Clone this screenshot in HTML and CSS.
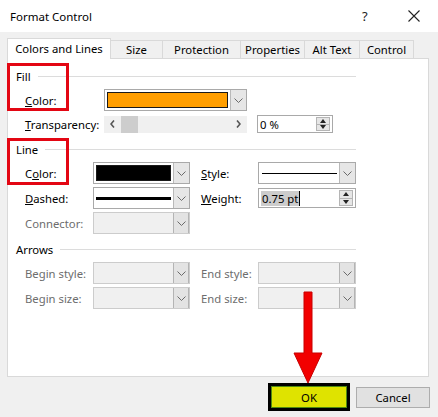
FILE: index.html
```html
<!DOCTYPE html>
<html>
<head>
<meta charset="utf-8">
<link rel="stylesheet" href="styles.css">
</head>
<body>
<div class="window">
  <div class="titlebar">
    <span class="title">Format Control</span>
    <span class="help">?</span>
    <span class="close"><svg width="12" height="12" viewBox="0 0 12 12"><path d="M0.5 0.5 L11.5 11.5 M11.5 0.5 L0.5 11.5" stroke="#222" stroke-width="1.1" fill="none"/></svg></span>
  </div>
  <div class="content">
    <div class="tabs">
      <div class="tab tab-active tab-colors">Colors and Lines</div>
      <div class="tab tab-size">Size</div>
      <div class="tab tab-protection">Protection</div>
      <div class="tab tab-properties">Properties</div>
      <div class="tab tab-alt">Alt Text</div>
      <div class="tab tab-control">Control</div>
    </div>
    <div class="panel">
      <div class="group-head head-fill"><span>Fill</span><i></i></div>
      <div class="row row-fill-color">
        <span class="label label-fill"><u>C</u>olor:</span>
        <div class="combo combo-fill">
          <div class="combo-field"><span class="swatch swatch-orange"></span></div>
          <div class="combo-btn"><svg width="9" height="5" viewBox="0 0 9 5"><path d="M0.5 0.5 L4.5 4.5 L8.5 0.5" fill="none" stroke="#6a6a6a"/></svg></div>
        </div>
      </div>
      <div class="row row-transp">
        <span class="label label-fill"><u>T</u>ransparency:</span>
        <div class="scrollbar">
          <span class="sarrow"><svg width="5" height="8" viewBox="0 0 5 8"><path d="M4 0.5 L1 4 L4 7.5" fill="none" stroke="#555" stroke-width="1.6"/></svg></span>
          <span class="thumb"></span>
          <span class="track"></span>
          <span class="sarrow"><svg width="5" height="8" viewBox="0 0 5 8"><path d="M1 0.5 L4 4 L1 7.5" fill="none" stroke="#555" stroke-width="1.6"/></svg></span>
        </div>
        <div class="spinner spinner-transp">
          <span class="spin-text">0 %</span>
          <span class="spin-btns"><span class="up"></span><span class="down"></span></span>
        </div>
      </div>

      <div class="group-head head-line"><span>Line</span><i></i></div>
      <div class="row row-line-first">
        <span class="label label-line">C<u>o</u>lor:</span>
        <div class="combo combo-line">
          <div class="combo-field"><span class="swatch swatch-black"></span></div>
          <div class="combo-btn"><svg width="9" height="5" viewBox="0 0 9 5"><path d="M0.5 0.5 L4.5 4.5 L8.5 0.5" fill="none" stroke="#6a6a6a"/></svg></div>
        </div>
        <span class="label label-right"><u>S</u>tyle:</span>
        <div class="combo combo-right">
          <div class="combo-field"><span class="stroke stroke-thin"></span></div>
          <div class="combo-btn"><svg width="9" height="5" viewBox="0 0 9 5"><path d="M0.5 0.5 L4.5 4.5 L8.5 0.5" fill="none" stroke="#6a6a6a"/></svg></div>
        </div>
      </div>
      <div class="row row-line">
        <span class="label label-line"><u>D</u>ashed:</span>
        <div class="combo combo-line">
          <div class="combo-field"><span class="stroke stroke-thick"></span></div>
          <div class="combo-btn"><svg width="9" height="5" viewBox="0 0 9 5"><path d="M0.5 0.5 L4.5 4.5 L8.5 0.5" fill="none" stroke="#6a6a6a"/></svg></div>
        </div>
        <span class="label label-right"><u>W</u>eight:</span>
        <div class="spinner spinner-weight">
          <span class="spin-text"><span class="selected">0.75 pt</span><span class="caret"></span></span>
          <span class="spin-btns"><span class="up"></span><span class="down"></span></span>
        </div>
      </div>
      <div class="row row-line">
        <span class="label label-line disabled">Connector:</span>
        <div class="combo combo-line combo-disabled">
          <div class="combo-field"></div>
          <div class="combo-btn"><svg width="9" height="5" viewBox="0 0 9 5"><path d="M0.5 0.5 L4.5 4.5 L8.5 0.5" fill="none" stroke="#6a6a6a"/></svg></div>
        </div>
      </div>

      <div class="group-head head-arrows"><span>Arrows</span><i></i></div>
      <div class="row row-line-first">
        <span class="label label-line disabled">Begin style:</span>
        <div class="combo combo-line combo-disabled">
          <div class="combo-field"></div>
          <div class="combo-btn"><svg width="9" height="5" viewBox="0 0 9 5"><path d="M0.5 0.5 L4.5 4.5 L8.5 0.5" fill="none" stroke="#6a6a6a"/></svg></div>
        </div>
        <span class="label label-right disabled">End style:</span>
        <div class="combo combo-right combo-disabled">
          <div class="combo-field"></div>
          <div class="combo-btn"><svg width="9" height="5" viewBox="0 0 9 5"><path d="M0.5 0.5 L4.5 4.5 L8.5 0.5" fill="none" stroke="#6a6a6a"/></svg></div>
        </div>
      </div>
      <div class="row row-line">
        <span class="label label-line disabled">Begin size:</span>
        <div class="combo combo-line combo-disabled">
          <div class="combo-field"></div>
          <div class="combo-btn"><svg width="9" height="5" viewBox="0 0 9 5"><path d="M0.5 0.5 L4.5 4.5 L8.5 0.5" fill="none" stroke="#6a6a6a"/></svg></div>
        </div>
        <span class="label label-right disabled">End size:</span>
        <div class="combo combo-right combo-disabled">
          <div class="combo-field"></div>
          <div class="combo-btn"><svg width="9" height="5" viewBox="0 0 9 5"><path d="M0.5 0.5 L4.5 4.5 L8.5 0.5" fill="none" stroke="#6a6a6a"/></svg></div>
        </div>
      </div>
    </div>
    <div class="buttons">
      <div class="btn-ok-frame"><div class="btn btn-ok">OK</div></div>
      <div class="btn btn-cancel">Cancel</div>
    </div>
  </div>

  <div class="callout callout-fill"></div>
  <div class="callout callout-line"></div>
  <svg class="arrow" width="32" height="94" viewBox="0 0 32 94">
    <path d="M12 1 L20 1 L20 62 L30 62 L16 92 L2 62 L12 62 Z" fill="#f20000" stroke="#c80000" stroke-width="1" stroke-linejoin="round"/>
  </svg>
</div>
</body>
</html>
```

FILE: styles.css
```css
* { box-sizing: border-box; }

html, body {
  margin: 0;
  padding: 0;
}

body {
  width: 438px;
  height: 417px;
  overflow: hidden;
  background: #f0f0f0;
  font-family: "Noto Sans", "DejaVu Sans", sans-serif;
  font-size: 11.3px;
  color: #000;
}

.window {
  position: relative;
  width: 438px;
  height: 417px;
  background: #f0f0f0;
}

/* Title bar */
.titlebar {
  height: 32px;
  background: #fff;
  display: flex;
  align-items: center;
  padding-left: 10px;
}

.title {
  flex: 1;
  font-size: 11.5px;
  color: #000;
}

.help {
  width: 12px;
  margin-right: 34px;
  font-size: 13px;
  color: #222;
}

.close {
  width: 12px;
  height: 12px;
  margin-right: 18px;
  display: flex;
}

/* Content */
.content {
  padding: 6px 9px 0 7px;
}

.tabs {
  display: flex;
  align-items: flex-end;
  height: 20px;
  position: relative;
  z-index: 2;
}

.tab {
  height: 18px;
  border: 1px solid #d9d9d9;
  border-bottom: none;
  border-left: none;
  background: #f0f0f0;
  display: flex;
  align-items: center;
  justify-content: center;
  color: #000;
  white-space: nowrap;
}

.tab-active {
  height: 21px;
  margin-bottom: -1px;
  background: #fff;
  border-left: 1px solid #d9d9d9;
  padding-bottom: 1px;
}

.tab-colors { width: 104px; }
.tab-size { width: 52px; }
.tab-protection { width: 78px; }
.tab-properties { width: 64px; }
.tab-alt { width: 55px; }
.tab-control { width: 54px; }

.panel {
  width: 422px;
  height: 319px;
  background: #fff;
  border: 1px solid #d9d9d9;
  padding: 0 0 0 8px;
  display: flex;
  flex-direction: column;
}

/* Group headers */
.group-head {
  width: 340px;
  height: 16px;
  display: flex;
  align-items: center;
  gap: 7px;
}

.group-head i {
  flex: 1;
  height: 1px;
  background: #dcdcdc;
}

.head-fill { margin-top: 9px; }
.head-line { margin-top: 6px; }
.head-arrows { margin-top: 7px; }

/* Rows */
.row {
  height: 22px;
  display: flex;
  align-items: center;
  padding-left: 9px;
}

.row-fill-color { margin-top: 5px; }
.row-transp { margin-top: 2px; }
.row-line-first { margin-top: 5px; }
.row-line { margin-top: 3px; }

.label {
  white-space: nowrap;
}

.label-fill { width: 79px; }
.label-line { width: 68px; }
.label-right { width: 57px; margin-left: 11px; }

.disabled { color: #6d6d6d; }

/* Combo boxes */
.combo {
  height: 22px;
  display: flex;
  border: 1px solid #a9a9a9;
  background: #fff;
}

.combo-fill { width: 143px; }
.combo-line { width: 97px; }
.combo-right { width: 98px; }

.combo-field {
  flex: 1;
  padding: 2px;
  display: flex;
  align-items: center;
}

.combo-btn {
  width: 16px;
  background: #e6e6e6;
  border-left: 1px solid #b9b9b9;
  display: flex;
  align-items: center;
  justify-content: center;
}

.combo-disabled {
  background: #f0f0f0;
  border-color: #cccccc;
}

.combo-disabled .combo-btn {
  background: #e3e3e3;
  border-left: 1px solid #b4b4b4;
  border-right: 1px solid #b4b4b4;
}

.swatch {
  display: block;
  width: 100%;
  height: 100%;
  border: 1px solid #1a1a1a;
}

.swatch-orange { background: #ff9e00; }
.swatch-black { background: #000; }

.stroke {
  display: block;
  width: 100%;
  background: #000;
}

.stroke-thin { height: 1px; margin-left: 1px; }
.stroke-thick { height: 3px; }

/* Scrollbar */
.scrollbar {
  width: 143px;
  height: 17px;
  background: #f0f0f0;
  display: flex;
  align-items: center;
}

.sarrow {
  width: 17px;
  height: 17px;
  display: flex;
  align-items: center;
  justify-content: center;
}

.thumb {
  width: 17px;
  height: 17px;
  background: #cdcdcd;
}

.track { flex: 1; }

/* Spinners */
.spinner {
  height: 18px;
  display: flex;
  border: 1px solid #a9a9a9;
  background: #fff;
}

.spinner-transp { width: 76px; margin-left: 10px; height: 18px; }
.spinner-weight { width: 98px; height: 20px; }

.spin-text {
  flex: 1;
  display: flex;
  align-items: center;
  padding-left: 2px;
}

.selected {
  background: #cccccc;
  padding: 0 1px;
  line-height: 15px;
}

.caret {
  width: 1px;
  height: 15px;
  background: #000;
}

.spin-btns {
  width: 14px;
  margin: 1px 2px 1px 0;
  display: flex;
  flex-direction: column;
  border: 1px solid #b5b5b5;
  background: #e6e6e6;
}

.spin-btns span {
  flex: 1;
  display: flex;
  align-items: center;
  justify-content: center;
}

.spin-btns .up { border-bottom: 1px solid #b5b5b5; }

.spin-btns .up::before {
  content: "";
  border-left: 3px solid transparent;
  border-right: 3px solid transparent;
  border-bottom: 4px solid #222;
}

.spin-btns .down::before {
  content: "";
  border-left: 3px solid transparent;
  border-right: 3px solid transparent;
  border-top: 4px solid #222;
}

/* Buttons */
.buttons {
  display: flex;
  justify-content: flex-end;
  align-items: center;
  gap: 6px;
  margin-top: 6px;
  margin-right: -1px;
}

.btn {
  display: flex;
  align-items: center;
  justify-content: center;
  color: #000;
}

.btn-ok-frame {
  width: 82px;
  height: 28px;
  background: #000;
  padding: 3px;
}

.btn-ok {
  width: 100%;
  height: 100%;
  background: #dfe300;
  border: 1px solid #4f8a10;
}

.btn-cancel {
  width: 74px;
  height: 21px;
  background: #e1e1e1;
  border: 1px solid #adadad;
}

/* Annotations (overlays) */
.callout {
  position: absolute;
  border: 3px solid #e30613;
}

.callout-fill {
  left: 7px;
  top: 63px;
  width: 62px;
  height: 48px;
}

.callout-line {
  left: 7px;
  top: 138px;
  width: 62px;
  height: 47px;
}

.arrow {
  position: absolute;
  left: 292px;
  top: 291px;
}
```
